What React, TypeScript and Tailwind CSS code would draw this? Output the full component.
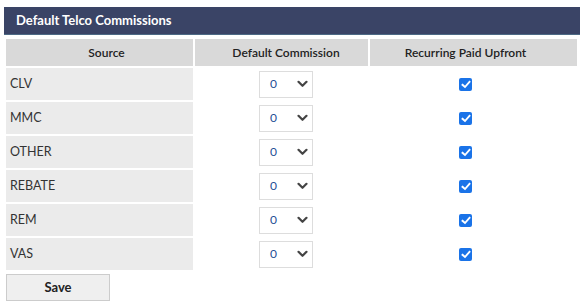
import React from "react";

const rows = ["CLV", "MMC", "OTHER", "REBATE", "REM", "VAS"];

function Chevron() {
  return (
    <svg width="11" height="8" viewBox="0 0 11 8" className="shrink-0">
      <path d="M1.5 1.8 L5.5 5.8 L9.5 1.8" fill="none" stroke="#444" strokeWidth="2.2" strokeLinecap="round" strokeLinejoin="round" />
    </svg>
  );
}

function Check() {
  return (
    <div className="w-[13px] h-[13px] rounded-[2px] bg-[#1a73e8] flex items-center justify-center">
      <svg width="10" height="9" viewBox="0 0 10 9">
        <path d="M1.5 4.8 L4 7 L8.5 1.8" fill="none" stroke="white" strokeWidth="1.9" strokeLinecap="square" />
      </svg>
    </div>
  );
}

export default function App() {
  return (
    <div className="w-[580px] h-[301px] bg-white pt-[7px] pl-[4px] overflow-hidden" style={{ fontFamily: "Lato, 'Noto Sans', sans-serif" }}>
      <div className="h-[28px] bg-[#3a4466] border-b border-[#4d6a85] flex items-center pl-[12px]">
        <span className="text-white font-bold text-[13px] leading-none">Default Telco Commissions</span>
      </div>
      <div className="grid grid-cols-[187px_173px_207px] gap-[2px] pl-[2px] pt-[4px]">
        <div className="h-[27px] bg-[#d9d9d9] flex items-center justify-center pl-[14px] text-[12px] font-semibold text-[#222]">Source</div>
        <div className="h-[27px] bg-[#d9d9d9] flex items-center justify-center pl-[9px] text-[12px] font-semibold text-[#222]">Default Commission</div>
        <div className="h-[27px] bg-[#d9d9d9] flex items-center justify-center pr-[16px] text-[12px] font-semibold text-[#222]">Recurring Paid Upfront</div>
        {rows.map((r) => (
          <React.Fragment key={r}>
            <div className="h-[32px] bg-[#ebebeb] flex items-center pl-[4px] text-[12.5px] text-[#333]">{r}</div>
            <div className="h-[32px] bg-white flex items-center justify-center pl-[9px]">
              <div className="w-[54px] h-[27px] border border-[#dddddd] bg-white flex items-center justify-between pl-[10px] pr-[4px]">
                <span className="text-[12px] text-[#1f4f96] leading-none">0</span>
                <Chevron />
              </div>
            </div>
            <div className="h-[32px] bg-white flex items-center justify-center pr-[16px]">
              <Check />
            </div>
          </React.Fragment>
        ))}
      </div>
      <div className="pl-[2px] pt-[4px]">
        <button className="w-[104px] h-[27px] bg-[#efefef] border border-[#cccccc] text-[13px] font-bold text-[#222] flex items-center justify-center">Save</button>
      </div>
    </div>
  );
}
